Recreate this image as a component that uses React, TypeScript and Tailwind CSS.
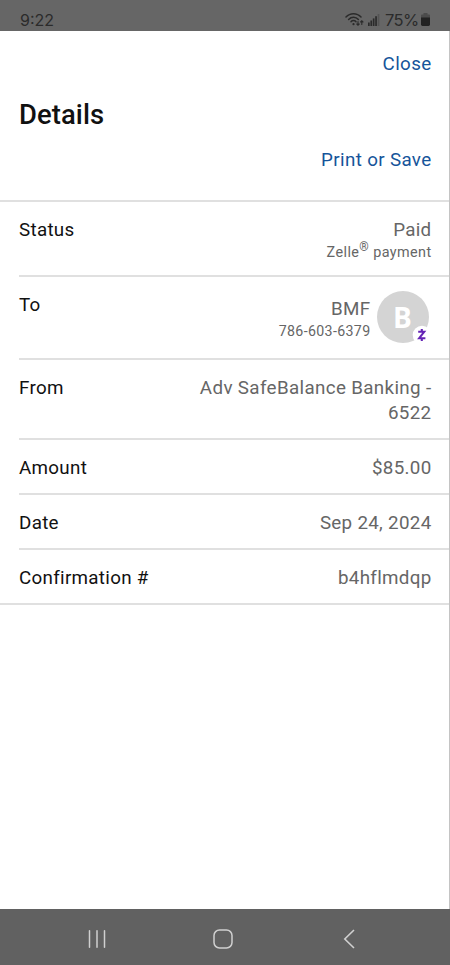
import React from "react";

interface DetailRowProps {
  label: string;
  height: string;
  last?: boolean;
  children: React.ReactNode;
}

const DetailRow: React.FC<DetailRowProps> = ({ label, height, last, children }) => {
  return (
    <div className={last ? "border-b-2 border-[#e0e0e0] pl-[19px]" : "pl-[19px]"}>
      <div
        className={`flex justify-between pr-[17.5px] pt-4 ${height} ${
          last ? "" : "border-b-2 border-[#e0e0e0]"
        }`}
      >
        <dt className="text-[#111]">{label}</dt>
        <dd className="w-[240px] text-right text-[#666]">{children}</dd>
      </div>
    </div>
  );
};

const StatusBar = () => (
  <div className="flex h-[31px] shrink-0 items-end justify-between bg-[#666] pl-5 pr-[20px] font-['Inter',sans-serif] text-[#2b2b2b]">
    <span className="text-[16px] leading-[22px]">9:22</span>
    <div className="flex items-end">
      <svg className="mb-[4px] h-[15px] w-[19px]" viewBox="0 0 19 15" fill="none" stroke="currentColor" strokeWidth="1.5" strokeLinecap="round">
        <path d="M1 5C5 .6 12 .6 16 5" />
        <path d="M3.6 7.4C6.4 4.4 10.8 4.4 13.4 7.4" />
        <path d="M6 9.8C7.4 8.2 9.6 8.2 11 9.8" />
        <path d="M8.5 12V12.2" strokeWidth="2.2" />
        <path d="M13 9.5V13M11.8 12L13 13.2L14.2 12M16.8 12.5V9M15.6 10L16.8 8.8L18 10" strokeWidth="1.1" />
      </svg>
      <svg className="mb-[5px] ml-[4px] h-[12px] w-[12px]" viewBox="0 0 12 12" fill="currentColor">
        <rect x="0" y="8.5" width="1.7" height="3.5" />
        <rect x="2.4" y="6.5" width="1.7" height="5.5" />
        <rect x="4.8" y="4.4" width="1.7" height="7.6" />
        <rect x="7.2" y="2.2" width="1.7" height="9.8" />
        <rect x="9.7" y="0" width="1.7" height="12" opacity=".3" />
      </svg>
      <span className="ml-[5px] w-[34px] text-[16.5px] leading-[22px] tracking-[-0.6px]">75%</span>
      <svg className="mb-[5px] ml-[2px] h-[13px] w-[9px]" viewBox="0 0 9 13">
        <path d="M2.5 0H6.5V1.4H8Q9 1.4 9 2.6V5H0V2.6Q0 1.4 1 1.4H2.5Z" fill="#4b4b4b" />
        <path d="M0 4.4H9V11.6Q9 13 7.6 13H1.4Q0 13 0 11.6Z" fill="#222" />
      </svg>
    </div>
  </div>
);

const NavigationBar = () => (
  <div className="flex h-[56px] shrink-0 items-center bg-[#616161] pl-[88px] pt-[4px] text-[#d0d0d0]">
    <svg className="h-[18px] w-[18px]" viewBox="0 0 18 18" fill="none" stroke="currentColor" strokeWidth="1.5" strokeLinecap="round">
      <path d="M1.5 .8V17.2M9 .8V17.2M16.5 .8V17.2" />
    </svg>
    <svg className="ml-[107px] h-[20px] w-[20px]" viewBox="0 0 20 20" fill="none" stroke="currentColor" strokeWidth="1.5">
      <rect x="1" y="1" width="18" height="18" rx="5.5" />
    </svg>
    <svg className="ml-[110px] h-[20px] w-[12px]" viewBox="0 0 12 20" fill="none" stroke="currentColor" strokeWidth="1.6">
      <path d="M11 1L1.8 10L11 19" />
    </svg>
  </div>
);

const Avatar = () => (
  <div className="relative flex h-[52px] w-[52px] items-center justify-center rounded-full bg-[#d4d4d4]">
    <span className="font-['Open_Sans',sans-serif] text-[28px] font-bold leading-none tracking-normal text-white">B</span>
    <svg className="absolute left-[35px] top-[34px] h-[20px] w-[20px]" viewBox="0 0 20 20">
      <circle cx="10" cy="10" r="9.3" fill="#fff" />
      <path
        d="M6.2 6.8H12.2L7.2 13.2H13.4M9.8 4V6.8M9.8 13.2V16"
        fill="none"
        stroke="#6423b5"
        strokeWidth="2.1"
      />
    </svg>
  </div>
);

export default function App() {
  return (
    <div className="flex h-[965px] w-[450px] flex-col overflow-hidden font-['Roboto',sans-serif]">
      <StatusBar />
      <main className="flex-1 border-r border-[#c4c4c4] bg-white text-[18.8px] leading-[24.5px] tracking-[0.3px]">
        <header className="flex h-[171px] flex-col border-b-2 border-[#e0e0e0] pl-[19px] pr-[17.5px] pt-[21px]">
          <button className="self-end text-[#15549a] tracking-[0.35px]">Close</button>
          <h1 className="mt-[21.5px] text-[27.4px] font-medium leading-[34px] tracking-[0.1px] text-[#111]">
            Details
          </h1>
          <button className="mt-4 self-end text-[#15549a] tracking-[0.35px]">Print or Save</button>
        </header>
        <dl>
          <DetailRow label="Status" height="h-[75px]">
            <p>Paid</p>
            <p className="text-[14.4px] leading-[20px] tracking-[0.4px]">
              Zelle<sup className="text-[12px]">®</sup> payment
            </p>
          </DetailRow>
          <DetailRow label="To" height="h-[83px]">
            <div className="-mt-[2px] flex justify-end gap-[6px] pr-[3px]">
              <div className="pt-[5.5px]">
                <p>BMF</p>
                <p className="text-[14.2px] leading-[20px] tracking-[0.35px]">786-603-6379</p>
              </div>
              <Avatar />
            </div>
          </DetailRow>
          <DetailRow label="From" height="h-[80px]">
            <span className="tracking-[0.35px]">Adv SafeBalance Banking - 6522</span>
          </DetailRow>
          <DetailRow label="Amount" height="h-[55px]">$85.00</DetailRow>
          <DetailRow label="Date" height="h-[55px]">Sep 24, 2024</DetailRow>
          <DetailRow label="Confirmation #" height="h-[53px]" last>b4hflmdqp</DetailRow>
        </dl>
      </main>
      <NavigationBar />
    </div>
  );
}
